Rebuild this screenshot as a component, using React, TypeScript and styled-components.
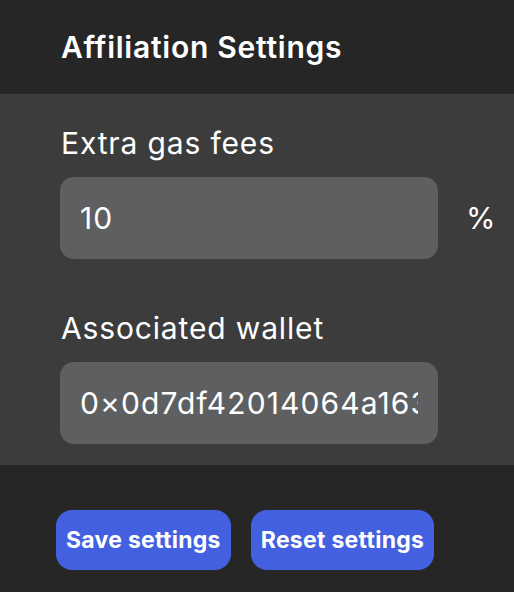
import React from "react";
import styled, { createGlobalStyle } from "styled-components";

const Global = createGlobalStyle`
  html, body { margin: 0; padding: 0; background: #262626; }
  body { font-family: Inter, "Noto Sans", sans-serif; color: #fff; }
  * { box-sizing: border-box; }
`;

const Page = styled.div`
  width: 514px;
  height: 592px;
  display: flex;
  flex-direction: column;
  background: #262626;
`;

const Header = styled.header`
  height: 94px;
  display: flex;
  align-items: center;
  padding-left: 61px;
  padding-bottom: 1px;
`;

const Title = styled.h1`
  margin: 0;
  font-size: 30px;
  font-weight: 600;
  letter-spacing: 0.75px;
  color: #fff;
`;

const Panel = styled.section`
  background: #3c3c3c;
  height: 371px;
  padding: 31px 0 0 60px;
  display: flex;
  flex-direction: column;
`;

const Field = styled.div<{ $gap?: number }>`
  display: flex;
  flex-direction: column;
  gap: 16px;
  margin-bottom: ${(p) => p.$gap ?? 0}px;
`;

const Label = styled.label`
  font-size: 30px;
  line-height: 36px;
  letter-spacing: 0.85px;
  padding-left: 1px;
  color: #fff;
`;

const Row = styled.div`
  display: flex;
  align-items: center;
`;

const Input = styled.input`
  width: 378px;
  height: 82px;
  border: none;
  outline: none;
  border-radius: 14px;
  background: #5e5f61;
  padding: 0 20px;
  font-family: Inter, "Noto Sans", sans-serif;
  font-size: 30px;
  letter-spacing: 1.1px;
  color: #fff;
`;

const Unit = styled.span`
  margin-left: 28px;
  font-size: 30px;
  color: #fff;
`;

const Actions = styled.div`
  display: flex;
  gap: 20px;
  padding: 45px 0 0 56px;
`;

const Button = styled.button`
  height: 60px;
  padding: 0 10px;
  border: none;
  border-radius: 16px;
  background: #4360e1;
  color: #fff;
  font-family: Inter, "Noto Sans", sans-serif;
  font-size: 23px;
  font-weight: 700;
  letter-spacing: 0.28px;
  cursor: pointer;
`;

export default function App() {
  return (
    <Page>
      <Global />
      <Header>
        <Title>Affiliation Settings</Title>
      </Header>
      <Panel>
        <Field $gap={51}>
          <Label>Extra gas fees</Label>
          <Row>
            <Input readOnly value="10" />
            <Unit>%</Unit>
          </Row>
        </Field>
        <Field>
          <Label>Associated wallet</Label>
          <Row>
            <Input readOnly value="0×0d7df42014064a163" />
          </Row>
        </Field>
      </Panel>
      <Actions>
        <Button>Save settings</Button>
        <Button>Reset settings</Button>
      </Actions>
    </Page>
  );
}
